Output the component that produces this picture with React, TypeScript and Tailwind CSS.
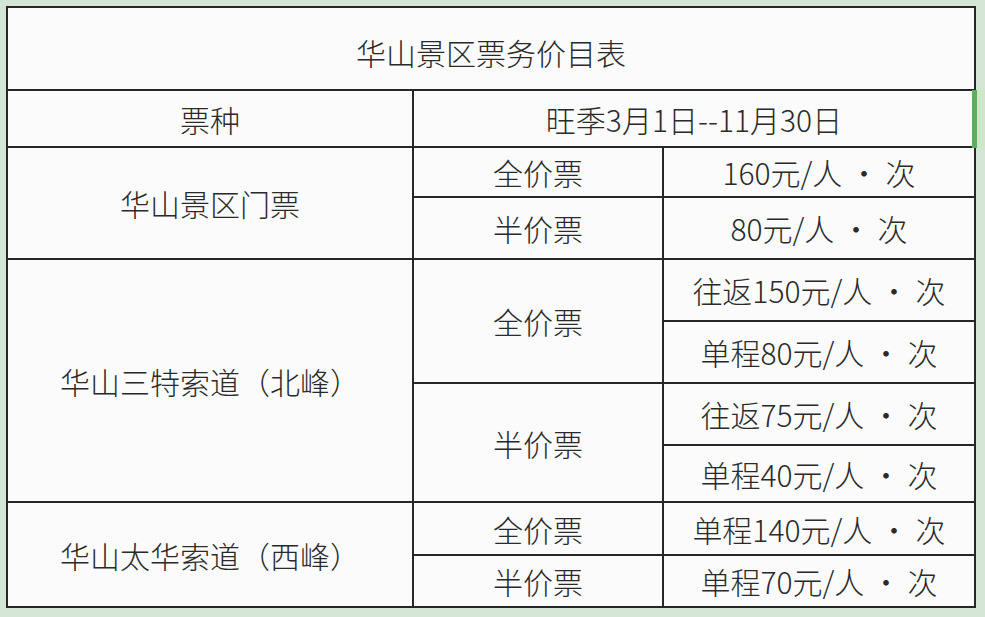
import React from 'react';

type Cell = { text: string; cls?: string };

// rows/cols spans are written out so Tailwind can see them
const cells: Cell[] = [
  { text: '华山景区票务价目表', cls: 'col-span-3 pt-[7px]' },
  { text: '票种' },
  { text: '旺季3月1日--11月30日', cls: 'col-span-2' },
  { text: '华山景区门票', cls: 'row-span-2' },
  { text: '全价票' },
  { text: '160元/人 · 次' },
  { text: '半价票' },
  { text: '80元/人 · 次' },
  { text: '华山三特索道（北峰）', cls: 'row-span-4' },
  { text: '全价票', cls: 'row-span-2' },
  { text: '往返150元/人 · 次' },
  { text: '单程80元/人 · 次' },
  { text: '半价票', cls: 'row-span-2' },
  { text: '往返75元/人 · 次' },
  { text: '单程40元/人 · 次' },
  { text: '华山太华索道（西峰）', cls: 'row-span-2' },
  { text: '全价票' },
  { text: '单程140元/人 · 次' },
  { text: '半价票' },
  { text: '单程70元/人 · 次' },
];

export default function App() {
  return (
    <div
      className="relative w-[985px] h-[617px] bg-[#d3e6d6] pl-[6px] pt-[6px] overflow-hidden"
      style={{ fontFamily: '"Noto Sans CJK SC", "Noto Sans", sans-serif' }}
    >
      <div className="grid w-fit gap-[2px] p-[2px] bg-[#262626] grid-cols-[404px_248px_310px] grid-rows-[81px_55px_48px_60px_60px_60px_60px_55px_51px_50px]">
        {cells.map((c, i) => (
          <div
            key={i}
            className={`flex items-center justify-center bg-[#fafbfa] text-[30px] font-light leading-none text-[#2a2a2a] whitespace-nowrap ${c.cls ?? ''}`}
          >
            {c.text}
          </div>
        ))}
      </div>
      {/* selected cell edge on the right */}
      <div className="absolute left-[972px] top-[90px] w-[13px] h-[58px] bg-[#cfe6c9] border-l-[5px] border-[#5fae5c]" />
    </div>
  );
}
